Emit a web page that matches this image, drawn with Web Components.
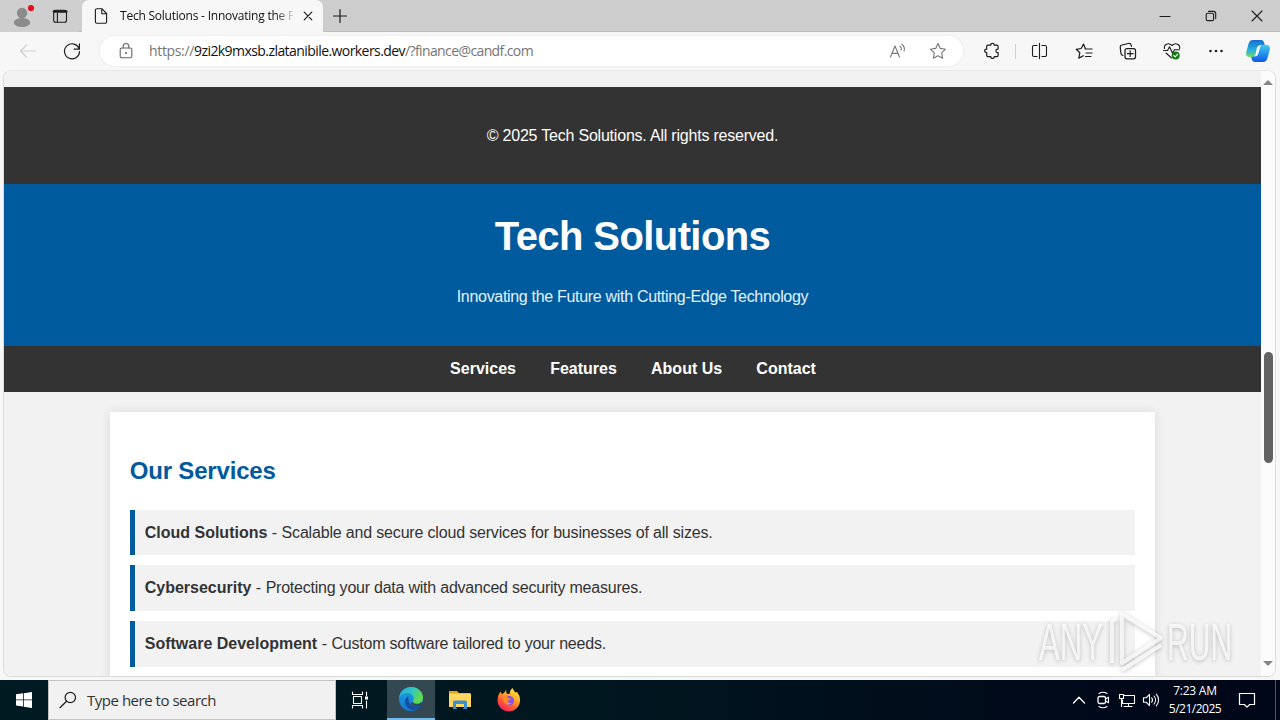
<!DOCTYPE html>
<html lang="en">
<head>
<meta charset="utf-8">
<title>Tech Solutions</title>
<style>
html,body{margin:0;height:100%;overflow:hidden}
</style>
</head>
<body>
<desktop-screen></desktop-screen>
<script>
const UI = '"Open Sans","Noto Sans",sans-serif';
const define = (name, html, extra) => {
  const t = document.createElement('template');
  t.innerHTML = html;
  customElements.define(name, class extends HTMLElement {
    constructor() {
      super();
      this.attachShadow({mode: 'open'}).appendChild(t.content.cloneNode(true));
    }
    connectedCallback() { if (extra) extra(this); }
  });
};

/* Text run tracked to occupy a given width. */
define('fit-text', `<style>:host{display:inline-block;white-space:pre}</style><span><slot></slot></span>`, el => {
  const want = parseFloat(el.getAttribute('width'));
  const n = el.textContent.length;
  const have = el.getBoundingClientRect().width;
  if (want && have) {
    el.style.letterSpacing = ((want - have) / n) + 'px';
  }
});

/* Icon set: width, height, drawing. */
const ICONS = {
  profile: [24,26,`<g stroke="none"><circle cx="12" cy="9" r="5.2" fill="#8b8b8b"/><ellipse cx="12" cy="18.5" rx="8.2" ry="4.6" fill="#8b8b8b"/><circle cx="21" cy="4" r="3.1" fill="#e01020"/></g>`],
  workspace: [16,16,`<rect x="1.7" y="2.2" width="12.8" height="12" rx="2"/><path d="M2 3.5h12.2" stroke-width="2.6"/><path d="M5.4 5v9"/>`],
  page: [14,18,`<path d="M2.8 1.7h5l4.8 4.8v8.3a1.4 1.4 0 0 1-1.4 1.4H2.8a1.4 1.4 0 0 1-1.4-1.4V3.1a1.4 1.4 0 0 1 1.4-1.4zM7.8 2v4.7h4.5"/>`],
  x: [10,10,`<path d="M1.2 1.2l7.6 7.6M8.8 1.2L1.2 8.800" stroke-width="1.2"/>`],
  plus: [14,14,`<path d="M7 .5v13M.5 7h13" stroke-width="1.2"/>`],
  min: [12,12,`<path d="M1 6.5h10" stroke-width="1.1"/>`],
  restore: [12,12,`<rect x="1.2" y="3.2" width="7.4" height="7.4" rx="1.4"/><path d="M3.5 1.4h5a2.2 2.2 0 0 1 2.2 2.2v5"/>`],
  close: [12,12,`<path d="M1 1l10 10M11 1L1 11" stroke-width="1.1"/>`],
  back: [18,16,`<path d="M16.500 8H1.5M7.500 2L1.5 8l6 6" stroke="#cfcfcf"/>`],
  reload: [18,18,`<path d="M16.2 7.2A7.5 7.5 0 1 0 16.5 9.5M16.4 1.8v5.4h-5.2" stroke-width="1.2"/>`],
  lock: [14,18,`<rect x="1.2" y="6" width="11.6" height="9.8" rx="1.6" stroke="#666"/><path d="M4.2 6V4.3a2.8 2.8 0 0 1 5.6 0V6" stroke="#666"/><circle cx="7" cy="11" r="1.1" fill="#666" stroke="none"/>`],
  read: [18,16,`<path d="M1.500 14L6 3l4.500 11M3 10.400h6M11 3.200c1.400 1 1.600 2.200 1.200 3.800M12.800 1.300c2.500 1.800 3 4.200 2.300 6.700" stroke="#777"/>`],
  star: [18,18,`<path d="M9 1.5l2.3 4.9 5.2.8-3.8 3.7.9 5.3L9 13.7l-4.6 2.5.9-5.3L1.5 7.2l5.2-.8z" stroke="#777"/>`],
  puzzle: [18,18,`<path d="M4.700 3.100h3.100c-.3-2.500 3.700-2.500 3.400 0h2.600a1.300 1.300 0 0 1 1.300 1.300v2.700c-2.900-.5-2.900 3.800 0 3.400v2.800a1.300 1.300 0 0 1-1.300 1.300h-2.600c.2 2.500-3.600 2.500-3.400 0H5a1.300 1.300 0 0 1-1.300-1.300v-2.800c-2.700.3-2.700-3.700 0-3.400V4.300a1.300 1.300 0 0 1 1-1.200z" stroke-width="1.2"/>`],
  split: [18,18,`<path d="M6.100 3.500H2.500A1.500 1.500 0 0 0 1.500 5v8a1.500 1.500 0 0 0 1.500 1.500h3.100M10.900 3.500H14A1.500 1.500 0 0 1 15.500 5v8a1.500 1.500 0 0 1-1.500 1.500h-3.100M8.500 1.200v15.600" stroke-width="1.100"/>`],
  favs: [18,18,`<path d="M10.500 7L8.500 2 6.200 6.500l-5 .8 3.600 3.500-1 5.300 4.500-2.400M10 7h7M11 11h6M10.500 14.500h5.500" stroke-width="1.2"/>`],
  collect: [18,18,`<rect x="6" y="6.500" width="10.500" height="10.300" rx="2" stroke-width="1.250"/><path d="M11.200 8.800v5.700M8.400 11.700h5.700M4 13.500c-2-.4-2-1.600-2.200-2.700L1.300 5.600C1.100 4 1.800 3.200 3 3L9.500 1.500c1.300-.3 2.300.3 2.600 1.600l.4 1.200" stroke-width="1.200"/>`],
  health: [20,20,`<path d="M2.500 7.500C1.500 3.500 6.500 1 10 4.500c3.500-3.500 8.600-1 7.600 3M1.500 9.500h4l2-3.700 3 6.400 1.900-3.500h5M4 12l5.500 5"/><circle cx="13.700" cy="14.500" r="4" fill="#107c10" stroke="none"/><path d="M11.800 14.500l1.400 1.400 2.500-2.700" stroke="#fff"/>`],
  dots: [16,16,`<g fill="#222" stroke="none"><circle cx="2.500" cy="8" r="1.300"/><circle cx="8" cy="8" r="1.300"/><circle cx="13.500" cy="8" r="1.300"/></g>`],
  copilot: [26,24,`<defs><linearGradient id="a" x1="0" y1="0" x2="0" y2="1"><stop stop-color="#176bd2"/><stop offset=".55" stop-color="#20aee0"/><stop offset="1" stop-color="#79d96c"/></linearGradient><linearGradient id="b" x1="0" y1="0" x2="0" y2="1"><stop stop-color="#45c9e8"/><stop offset=".5" stop-color="#2293f1"/><stop offset="1" stop-color="#1558df"/></linearGradient></defs><g stroke="none"><path d="M8 1h8c2 0 2.600 1 3.200 3l.6 2h-3c-2 0-3 .7-3.600 2.700l-2 6.300c-.7 2-2 3-4 3H4.500C1.500 18 .7 15.800 1.300 13L3.500 5C4.300 2.200 5.500 1 8 1z" fill="url(#a)"/><path d="M18.800 6h2.700c3 0 3.900 2.200 3.200 5l-2.200 8c-.8 2.800-2 4-4.500 4h-8c-2 0-2.700-1-3.300-3L6 18c2.500 0 4-.8 4.700-3l2.500-6.500c.6-1.800 2-2.500 3.600-2.500z" fill="url(#b)"/><path d="M12 8.500c.6-1.500 1.600-2 4.400-2-1 .8-1.300 1.600-1.700 3L13.200 15c-.6 1.700-1.600 2.500-4.200 2.500 1-.8 1.300-1.600 1.700-3z" fill="#fff"/></g>`],
  windows: [16,16,`<path d="M0 2.300L7 1.300V7.500H0zM7.800 1.200L16 0v7.500H7.800zM0 8.300h7v6.300l-7-1zM7.800 8.300H16V16l-8.200-1.200z" fill="#fff" stroke="none"/>`],
  search: [18,18,`<circle cx="11.300" cy="6.500" r="5.200" stroke-width="1.200"/><path d="M7.500 10.300L1 16.700" stroke-width="1.200"/>`],
  taskview: [18,18,`<path d="M1.500 1v2.500h10V1M1.500 17v-2.500h10V17M2.500 5.500h8v7h-8zM15.500 1v3.500M15.500 10v7" stroke="#fff"/><rect x="14" y="5.500" width="3" height="3" fill="#fff" stroke="none"/>`],
  edge: [24,24,`<defs><linearGradient id="a" x1="0" y1="0" x2="1" y2=".4"><stop stop-color="#24a4e8"/><stop offset=".55" stop-color="#31c7c0"/><stop offset="1" stop-color="#62db48"/></linearGradient><linearGradient id="b" x1="0" y1="0" x2="0" y2="1"><stop stop-color="#1ba0e2"/><stop offset="1" stop-color="#1478d4"/></linearGradient></defs><g stroke="none"><circle cx="12" cy="12" r="12" fill="url(#b)"/><path d="M0 11C1 4 6 0 12 0c7 0 12 5 12 10.500 0 4-3 6-6.200 6-2.300 0-4.200-.8-4.200-1.900 0-.8 1.200-1 1.200-3C14.800 8.500 12 6 8.500 6 4.500 6 1.200 8 0 11z" fill="url(#a)"/><path d="M9.500 9C5.500 11 5 16 7.500 19.500c2.500 3.300 7 4.300 11 2.500 1.800-.8 3.200-2 4-3.500-3.500 1.600-7.800 1.200-10.400-1-2.600-2.300-3.400-5.300-2.600-8.500z" fill="#164f9d"/><path d="M14 14.800c.2 2 2 2.600 4.300 2.400 2-.2 3.600-1 4.800-2.200l2 .5-1.500 3.700-1.100-.7c-3.400 1.500-7.400.9-9.700-1-1.100-1-.5-2.300 1.200-2.700z" fill="#334850"/></g>`],
  folder: [22,20,`<g stroke="none"><path d="M0 1h8l2 2h11v4H0z" fill="#e8a317"/><path d="M0 3.500h22V17H0z" fill="#ffd75e"/><path d="M4 18v-5.500C4 11 5 10.500 6 10.500h10c1 0 2 .5 2 2V18h-3v-4H7v4z" fill="#3b8ed0"/><path d="M4 18h4v1H4zM14 18h4v1h-4z" fill="#3b8ed0"/></g>`],
  firefox: [24,24,`<defs><linearGradient id="a" x1=".8" y1="0" x2=".2" y2="1"><stop stop-color="#fff04a"/><stop offset=".4" stop-color="#ffa226"/><stop offset=".7" stop-color="#ff5036"/><stop offset="1" stop-color="#e8176e"/></linearGradient></defs><g stroke="none"><path d="M3.500 3.500L4.500 6 7 5l2-3 .7 3.700 2.800.3c.3-2.500 1.300-4.700 3-6 .8 2 2 3.200 2.700 4.500L20 4c2.200 3 3.300 5.500 3 9-.6 6-5.200 10.500-11 10.500S.8 19 .5 13C.5 9 1.500 6.300 3.500 3.500z" fill="url(#a)"/><circle cx="12.300" cy="12.800" r="4.700" fill="#8552ee"/><path d="M6 9.500c2-1 4.300-.6 5.500.7l2.500.4c-.3 1.500-3 1.500-3.200 2.800 0 1.200 1.600 2 3.700 1.400-1.500 2.500-5.500 2.500-7.200 0C6.200 13.200 6 11.300 6 9.500z" fill="#ff8c2a"/></g>`],
  chevron: [14,10,`<path d="M1.500 8L7 2.300 12.500 8" stroke="#fff" stroke-width="1.300"/>`],
  camera: [14,18,`<rect x="2" y="5.500" width="7.500" height="7" rx="1.500" stroke="#fff" stroke-width="1.300"/><path d="M9.500 8L12.500 6.200v5.600L9.500 10M3 2.500C5.500.9 8.500.9 11 2.500M3 15.500c2.500 1.600 5.500 1.600 8 0" stroke="#fff"/>`],
  network: [18,16,`<path d="M6 3.500h10.500v8H4.500V8M10.500 11.500V14M6 14.500h8M1.500 2.500h4v4h-4zM3.500 6.500v8" stroke="#fff"/>`],
  sound: [18,16,`<path d="M1.500 5.800h2.600L7.500 2.500v11L4.100 10.200H1.500zM9.700 5.800c1 1.300 1 3.100 0 4.400M12 4c2 2.300 2 5.700 0 8M14.300 2.200c3 3.400 3 8.200 0 11.600" stroke="#fff"/>`],
  notice: [18,18,`<path d="M1.500 2.500h15v11h-4.800L9 16.200l-2.700-2.700H1.500z" stroke="#fff" stroke-width="1.200"/>`]
};
customElements.define('ui-icon', class extends HTMLElement {
  constructor() { super(); this.attachShadow({mode: 'open'}); }
  connectedCallback() {
    const [w, h, body] = ICONS[this.getAttribute('name')];
    this.shadowRoot.innerHTML = `<style>:host{display:inline-flex;flex:none;align-items:center;justify-content:center}svg{display:block;overflow:visible}</style>
      <svg width="${w}" height="${h}" viewBox="0 0 ${w} ${h}" fill="none" stroke="#1c1c1c" stroke-width="1.100" stroke-linejoin="round" stroke-linecap="round">${body}</svg>`;
  }
});

define('tab-strip', `<style>
:host{display:flex;height:32px;background:#cdcdcd;box-shadow:inset 0 -1px #bdbdbd;font:12px ${UI}}
.left{width:82px;display:flex;background:#cfcfcf;border-radius:0 0 6px 0}
.left ui-icon:first-child{width:44px;padding-top:1px}.left ui-icon:last-child{width:32px}
.tab{width:241px;background:#f7f7f7;border-radius:7px 7px 0 0;display:flex;align-items:center;color:#111}
.tab>ui-icon:first-child{width:38px}
.title{width:173px;overflow:hidden;line-height:32px;-webkit-mask:linear-gradient(90deg,#000 155px,transparent 176px);mask:linear-gradient(90deg,#000 155px,transparent 176px)}
.close{width:29px}.new{width:34px}
.gap{flex:1}.win{width:46px}
</style>
<div class="left"><ui-icon name="profile"></ui-icon><ui-icon name="workspace"></ui-icon></div>
<div class="tab"><ui-icon name="page"></ui-icon><div class="title"><fit-text width="174">Tech Solutions - Innovating the F</fit-text></div><ui-icon class="close" name="x"></ui-icon></div>
<ui-icon class="new" name="plus"></ui-icon><div class="gap"></div>
<ui-icon class="win" name="min"></ui-icon><ui-icon class="win" name="restore"></ui-icon><ui-icon class="win" name="close"></ui-icon>`);

define('address-bar', `<style>
:host{display:flex;align-items:center;width:863px;height:30px;border-radius:15px;background:#fff;box-shadow:0 0 3px #e4e4e4;font:14px/30px ${UI};color:#757575}
.lock{width:49px;padding-left:2px;box-sizing:border-box}
b{font-weight:400;color:#111}
.url{flex:1;white-space:nowrap;display:flex}
.a{width:40px}.s{width:40px;margin-right:5px}
</style><ui-icon class="lock" name="lock"></ui-icon>
<div class="url"><fit-text width="45">https://</fit-text><b><fit-text width="211">9zi2k9mxsb.zlatanibile.workers.dev</fit-text></b><fit-text width="128">/?finance@candf.com</fit-text></div>
<ui-icon class="a" name="read"></ui-icon><ui-icon class="s" name="star"></ui-icon>`);

define('tool-bar', `<style>
:host{display:flex;height:38px;align-items:center;background:#f7f7f7;padding:0 2px 0 6px}
ui-icon{width:44px}address-bar{margin:0 7px 0 6px}
i{width:1px;height:15px;background:#cfcfcf;margin:0 2px 0 1px}
.co{width:40px}
</style><ui-icon name="back"></ui-icon><ui-icon name="reload"></ui-icon><address-bar></address-bar>
<ui-icon name="puzzle"></ui-icon><i></i><ui-icon name="split"></ui-icon><ui-icon name="favs"></ui-icon><ui-icon name="collect"></ui-icon><ui-icon name="health"></ui-icon><ui-icon name="dots"></ui-icon><ui-icon class="co" name="copilot"></ui-icon>`);

define('site-footer', `<style>:host{display:block;background:#333;color:#fff;text-align:center;padding:20px}p{margin:16px 0}</style><p><slot></slot></p>`);
define('site-header', `<style>:host{display:block;background:#005a9e;color:#fff;text-align:center;padding:20px}
h1{font-size:40px;margin:0}p{margin:16px 0;color:#e0f4ff}</style><h1><slot name="title"></slot></h1><p><slot></slot></p>`);
define('site-nav', `<style>:host{display:flex;justify-content:center;gap:34.200px;background:#333;padding:10px 10px 10px 11px;color:#fff;font-weight:bold}</style><slot></slot>`);
define('service-item', `<style>:host{display:block;background:#f2f2f2;border-left:5px solid #005a9e;padding:10px;margin-bottom:10px;height:25.600px}</style><b><slot name="name"></slot></b> - <slot></slot>`);
define('content-card', `<style>:host{display:block;width:80%;margin:20px auto;padding:20px;background:#fff;box-shadow:0 0 10px rgba(0,0,0,.1)}
h2{font-size:24px;margin:20.500px 0 19.340px;height:38.400px;color:#005a9e}</style><h2><slot name="title"></slot></h2><slot></slot>`);

define('scroll-bar', `<style>:host{display:flex;flex-direction:column;align-items:center;width:14px;background:#fcfcfc}
i{width:0;border:5px solid transparent;flex:none}
.u{border-bottom:5px solid #858585;border-top:0;margin-top:9px}
.d{border-top:5px solid #858585;border-bottom:0;margin:auto 0 10px}
.t{width:9px;height:111px;border-radius:5px;background:#636363;margin-top:267px}
</style><i class="u"></i><div class="t"></div><i class="d"></i>`);

define('web-page', `<style>:host{display:block;flex:1;overflow:hidden;background:#f2f2f2;color:#333;font:16px/1.6 "Liberation Sans",Arial,sans-serif;padding-top:15.800px;white-space:nowrap}</style>
<site-footer><fit-text width="291.500">© 2025 Tech Solutions. All rights reserved.</fit-text></site-footer>
<site-header><fit-text slot="title" width="275.500">Tech Solutions</fit-text><fit-text width="351.500">Innovating the Future with Cutting-Edge Technology</fit-text></site-header>
<site-nav><span>Services</span><span>Features</span><span>About Us</span><span>Contact</span></site-nav>
<content-card><fit-text slot="title" width="146">Our Services</fit-text>
<service-item><span slot="name">Cloud Solutions</span><fit-text width="431">Scalable and secure cloud services for businesses of all sizes.</fit-text></service-item>
<service-item><span slot="name">Cybersecurity</span><fit-text width="376.500">Protecting your data with advanced security measures.</fit-text></service-item>
<service-item><span slot="name">Software Development</span><fit-text width="274.500">Custom software tailored to your needs.</fit-text></service-item>
</content-card>`);

define('browser-window', `<style>
:host{display:flex;flex-direction:column;height:680px;background:#f7f7f7}
.view{display:flex;height:605px;margin:0 4px 0 3px;border:1px solid #dcdcdc;border-top-color:#e8e8e8;border-radius:8px;overflow:hidden}
</style><tab-strip></tab-strip><tool-bar></tool-bar><div class="view"><web-page></web-page><scroll-bar></scroll-bar></div>`);

define('task-bar', `<style>
:host{display:flex;height:40px;background:linear-gradient(90deg,#001a22,#001720 45%,#000a1a 80%,#000718);font:15px ${UI};color:#333}
ui-icon{height:40px}
.st{width:48px}.search{width:288px;box-sizing:border-box;border:1px solid #c2c2c2;background:#f1f1f1;display:flex;align-items:center}
.search ui-icon{width:38px}.tv{width:48px;margin-right:3px}
.e{width:48px;height:38px!important;border-bottom:2px solid #76b9ed;background:#334850}
.f{width:49px}.gap{flex:1}
.tr{width:24px}.clock{width:64px;color:#fff;font-size:12px;line-height:18px;text-align:center;display:flex;flex-direction:column;align-items:center;padding-top:2px;box-sizing:border-box}
.n{width:40px}.desk{width:4px;border-left:1px solid #4e5563;margin-left:8px}
</style><ui-icon class="st" name="windows"></ui-icon><div class="search"><ui-icon name="search"></ui-icon><fit-text width="129">Type here to search</fit-text></div>
<ui-icon class="tv" name="taskview"></ui-icon><ui-icon class="e" name="edge"></ui-icon><ui-icon class="f" name="folder"></ui-icon><ui-icon class="f" name="firefox"></ui-icon>
<div class="gap"></div><ui-icon class="tr" name="chevron"></ui-icon><ui-icon class="tr" name="camera"></ui-icon><ui-icon class="tr" name="network"></ui-icon><ui-icon class="tr" name="sound"></ui-icon>
<div class="clock"><fit-text width="43.500">7:23 AM</fit-text><fit-text width="52.500">5/21/2025</fit-text></div><ui-icon class="n" name="notice"></ui-icon><div class="desk"></div>`);

define('water-mark', `<style>:host{position:absolute;left:1030px;top:602px;filter:drop-shadow(0 1px 2px rgba(0,0,0,.3))}svg{display:block}
text{font:51px "Liberation Sans",sans-serif}</style>
<svg width="212" height="74" viewBox="0 0 212 74" fill="#fff" fill-opacity=".75"><text transform="translate(9 58) scale(.61 1)">ANY</text>
<text transform="translate(137 58) scale(.59 1)">RUN</text>
<path d="M92 12L131 36 92 61zM92 12v49M86 17l-4 2v42M92 68l39-25" fill="none" stroke="#fff" stroke-opacity=".75" stroke-width="4" stroke-linejoin="round"/></svg>`);

define('desktop-screen', `<style>:host{display:block;position:relative;width:1280px;height:720px;overflow:hidden}</style>
<browser-window></browser-window><task-bar></task-bar><water-mark></water-mark>`);
</script>
</body>
</html>
